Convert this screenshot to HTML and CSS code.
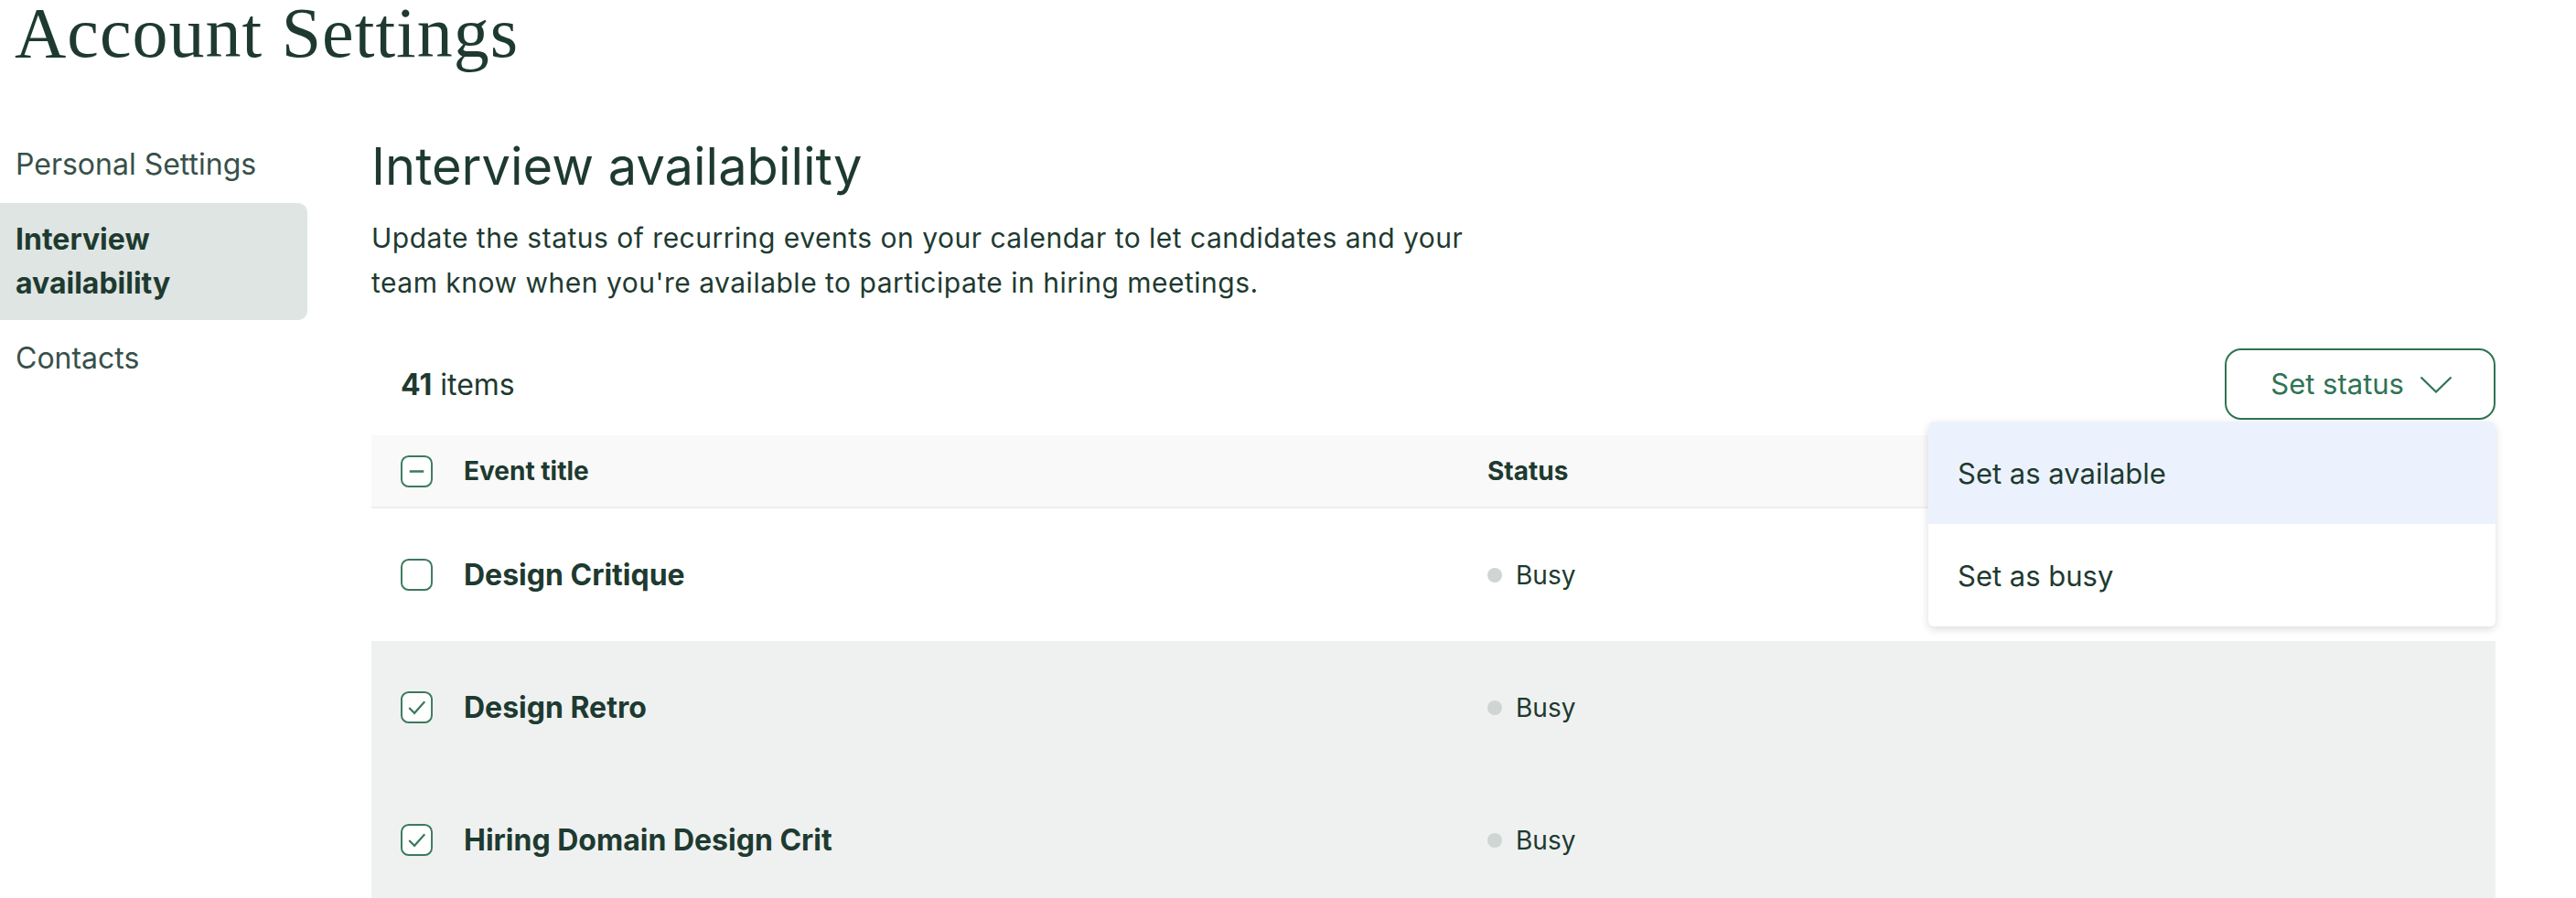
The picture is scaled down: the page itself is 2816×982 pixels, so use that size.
FILE: index.html
```html
<!DOCTYPE html>
<html lang="en">
<head>
  <meta charset="UTF-8" />
  <meta name="viewport" content="width=device-width, initial-scale=1" />
  <title>Account Settings</title>
  <link rel="stylesheet" href="styles.css">
</head>
<body>

  <h1 class="page-title">Account Settings</h1>

  <div class="layout">
    <nav class="side-nav">
      <a class="nav-item" href="#">Personal Settings</a>
      <a class="nav-item active" href="#">Interview availability</a>
      <a class="nav-item" href="#">Contacts</a>
    </nav>

    <main class="content">
      <h2>Interview availability</h2>
      <p class="intro">Update the status of recurring events on your calendar to let candidates and your team know when you're available to participate in hiring meetings.</p>

      <div class="toolbar">
        <div class="count"><strong>41</strong> items</div>
        <div class="status-menu">
          <button class="status-btn">Set status
            <svg class="chevron" width="36" height="19" viewBox="0 0 36 19"><path d="M1.5 1.5 L18 17.5 L34.5 1.5" fill="none" stroke="currentColor" stroke-width="2.2"/></svg>
          </button>
          <ul class="dropdown">
            <li class="highlighted">Set as available</li>
            <li>Set as busy</li>
          </ul>
        </div>
      </div>

      <div class="table">
        <div class="row head">
          <div class="cell-title">
            <svg class="check" width="35" height="35" viewBox="0 0 36 36"><rect x="1" y="1" width="34" height="34" rx="8" fill="#fff" stroke="#3a7a5d" stroke-width="2"/><path d="M10 18 H26" stroke="#3a7a5d" stroke-width="2.6"/></svg>
            <span>Event title</span>
          </div>
          <div class="cell-status">Status</div>
        </div>

        <div class="row item">
          <div class="cell-title">
            <svg class="check" width="35" height="35" viewBox="0 0 36 36"><rect x="1" y="1" width="34" height="34" rx="8" fill="#fff" stroke="#3a7a5d" stroke-width="2"/></svg>
            <span class="event-name">Design Critique</span>
          </div>
          <div class="cell-status"><span class="status"><span class="dot"></span>Busy</span></div>
        </div>

        <div class="row item selected">
          <div class="cell-title">
            <svg class="check" width="35" height="35" viewBox="0 0 36 36"><rect x="1" y="1" width="34" height="34" rx="8" fill="#fff" stroke="#3a7a5d" stroke-width="2"/><path d="M9.5 18.5 L15.5 24.5 L27 11.5" fill="none" stroke="#3a7a5d" stroke-width="2.2"/></svg>
            <span class="event-name">Design Retro</span>
          </div>
          <div class="cell-status"><span class="status"><span class="dot"></span>Busy</span></div>
        </div>

        <div class="row item selected">
          <div class="cell-title">
            <svg class="check" width="35" height="35" viewBox="0 0 36 36"><rect x="1" y="1" width="34" height="34" rx="8" fill="#fff" stroke="#3a7a5d" stroke-width="2"/><path d="M9.5 18.5 L15.5 24.5 L27 11.5" fill="none" stroke="#3a7a5d" stroke-width="2.2"/></svg>
            <span class="event-name">Hiring Domain Design Crit</span>
          </div>
          <div class="cell-status"><span class="status"><span class="dot"></span>Busy</span></div>
        </div>
      </div>
    </main>
  </div>

</body>
</html>
```

FILE: styles.css
```css
html, body {
  overflow: hidden;
}

body {
  margin: 0;
  font-family: Inter, "Noto Sans", sans-serif;
  color: #1e3a30;
  background: #fff;
}

.page-title {
  font-family: "Liberation Serif", serif;
  font-weight: 400;
  font-size: 78px;
  line-height: 72px;
  letter-spacing: 1px;
  margin: 0 0 0 16px;
}

.layout {
  display: flex;
  gap: 70px;
}

.side-nav {
  width: 336px;
  flex-shrink: 0;
  padding-top: 68px;
  display: flex;
  flex-direction: column;
  gap: 2px;
}

.nav-item {
  display: block;
  padding: 16px 40px 16px 17px;
  font-size: 32px;
  line-height: 48px;
  color: #37504a;
  text-decoration: none;
  border-radius: 0 10px 10px 0;
}

.nav-item.active {
  background: #dfe5e3;
  font-weight: 700;
  color: #1e3a30;
}

.content {
  flex: 1;
  margin-right: 88px;
  padding-top: 78px;
}

h2 {
  margin: 0;
  font-size: 56px;
  font-weight: 400;
  line-height: 64px;
}

.intro {
  margin: 22px 0 0;
  max-width: 1240px;
  font-size: 30px;
  letter-spacing: 0.5px;
  line-height: 49px;
}

.toolbar {
  display: flex;
  justify-content: space-between;
  align-items: center;
  margin-top: 47px;
}

.count {
  font-size: 32px;
  padding-left: 32px;
}

.count strong {
  font-weight: 700;
}

.status-menu {
  position: relative;
}

.status-btn {
  display: flex;
  align-items: center;
  gap: 17px;
  font-family: inherit;
  font-size: 31px;
  line-height: 40px;
  padding: 17px 45px 17px 48px;
  border: 2px solid #2f7353;
  border-radius: 18px;
  background: #fff;
  color: #2f7353;
  cursor: pointer;
}

.dropdown {
  position: absolute;
  top: calc(100% + 2px);
  right: 0;
  width: 620px;
  margin: 0;
  padding: 0;
  list-style: none;
  background: #fff;
  border-radius: 6px;
  box-shadow: 0 3px 10px rgba(0, 0, 0, 0.14);
  overflow: hidden;
  z-index: 2;
}

.dropdown li {
  height: 112px;
  display: flex;
  align-items: center;
  padding-left: 32px;
  font-size: 31px;
}

.dropdown li.highlighted {
  background: #ecf2fd;
}

.table {
  margin-top: 17px;
}

.row {
  display: grid;
  grid-template-columns: 1188px 1fr;
  align-items: center;
}

.row.head {
  height: 78px;
  background: #f9f9f9;
  border-bottom: 2px solid #efefef;
  font-size: 28px;
  font-weight: 700;
}

.row.item {
  height: 145px;
}

.row.selected {
  background: #eff1f0;
}

.cell-title {
  display: flex;
  align-items: center;
  gap: 34px;
  padding-left: 32px;
}

.cell-status {
  padding-left: 32px;
}

.check {
  display: block;
  flex-shrink: 0;
}

.event-name {
  font-size: 32px;
  font-weight: 700;
}

.status {
  display: flex;
  align-items: center;
  gap: 15px;
  font-size: 28px;
}

.dot {
  width: 16px;
  height: 16px;
  border-radius: 50%;
  background: #cfd5d3;
}
```
